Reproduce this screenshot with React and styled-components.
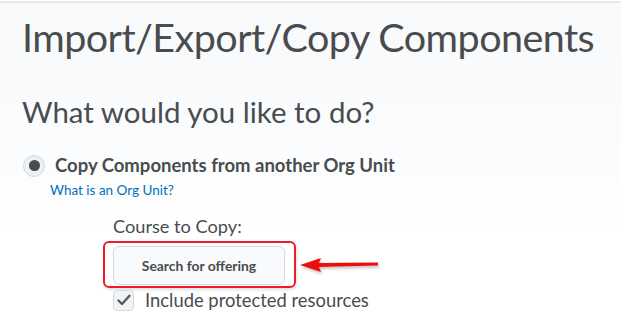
import React from "react";
import styled, { createGlobalStyle } from "styled-components";

const GlobalStyle = createGlobalStyle`
  html, body {
    margin: 0;
    padding: 0;
    background: #ffffff;
  }
  body {
    font-family: Lato, "Open Sans", "Liberation Sans", sans-serif;
    color: #494c4e;
    overflow: hidden;
  }
`;

const Page = styled.div`
  width: 621px;
  height: 327px;
  box-sizing: border-box;
  background: linear-gradient(#f8f9fb 0px, #fbfcfd 150px, #ffffff 230px);
`;

const TopRule = styled.div`
  height: 3px;
  background: linear-gradient(#ffffff 0 1px, #e7e8ea 1px 3px);
`;

const Content = styled.div`
  padding: 9px 0 0 22px;
  display: flex;
  flex-direction: column;
  align-items: flex-start;
`;

const Title = styled.h1`
  margin: 0;
  font-size: 39.5px;
  line-height: 50px;
  font-weight: 400;
  color: #494c4e;
  white-space: nowrap;
  letter-spacing: -0.55px;
`;

const Subtitle = styled.h2`
  margin: 32px 0 0;
  font-size: 29.5px;
  line-height: 36px;
  font-weight: 400;
  color: #494c4e;
  white-space: nowrap;
`;

const OptionRow = styled.label`
  margin: 24px 0 0 1px;
  display: flex;
  align-items: center;
  gap: 10px;
`;

const Radio = styled.span`
  width: 22px;
  height: 22px;
  box-sizing: border-box;
  border-radius: 50%;
  border: 1px solid #d3d9e3;
  background: #eef0f2;
  display: flex;
  align-items: center;
  justify-content: center;
  &::after {
    content: "";
    width: 11px;
    height: 11px;
    border-radius: 50%;
    background: #494c4e;
  }
`;

const OptionText = styled.span`
  font-size: 18.5px;
  line-height: 23px;
  font-weight: 700;
  color: #494c4e;
  white-space: nowrap;
`;

const HelpLink = styled.a`
  margin: 5px 0 0 28px;
  font-size: 13.5px;
  line-height: 16px;
  color: #006fbf;
  text-decoration: none;
`;

const Section = styled.div`
  margin: 17px 0 0 81px;
  display: flex;
  flex-direction: column;
  align-items: flex-start;
`;

const FieldLabel = styled.div`
  padding-left: 10px;
  font-size: 18.2px;
  line-height: 22px;
  color: #494c4e;
`;

const ButtonRow = styled.div`
  margin-top: 4px;
  display: flex;
  align-items: center;
  gap: 2px;
`;

const Highlight = styled.div`
  border: 2px solid #ec1c24;
  border-radius: 6px;
  padding: 3px 9px 1px 8px;
  box-shadow: 1px 2px 3px rgba(0, 0, 0, 0.12);
`;

const Button = styled.button`
  width: 172px;
  height: 39px;
  box-sizing: border-box;
  border: 1px solid #d3d9e3;
  border-radius: 6px;
  background: #f9fafb;
  font-family: Lato, "Open Sans", "Liberation Sans", sans-serif;
  font-size: 13.9px;
  font-weight: 700;
  color: #494c4e;
  cursor: pointer;
  padding: 0;
`;

const CheckRow = styled.label`
  margin: 1px 0 0 10px;
  display: flex;
  align-items: center;
  gap: 11px;
`;

const CheckBox = styled.span`
  width: 21px;
  height: 21px;
  box-sizing: border-box;
  border: 1px solid #d3d9e3;
  border-radius: 4px;
  background: #f1f3f5;
  display: flex;
  align-items: center;
  justify-content: center;
`;

const CheckText = styled.span`
  font-size: 18.4px;
  line-height: 22px;
  color: #494c4e;
  white-space: nowrap;
`;

const Arrow = () => (
  <svg width="84" height="24" viewBox="0 0 84 24" style={{ overflow: "visible" }}>
    <defs>
      <filter id="sh" x="-20%" y="-50%" width="140%" height="200%">
        <feDropShadow dx="1" dy="2" stdDeviation="1.5" floodColor="#000" floodOpacity="0.25" />
      </filter>
    </defs>
    <g filter="url(#sh)" fill="#ee1111">
      <polygon points="2,12 23,5 21,10 80,9.5 80,12.5 21,14 23,19" />
    </g>
  </svg>
);

const Check = () => (
  <svg width="14" height="12" viewBox="0 0 14 12">
    <path d="M1.5 6.5 L5 10 L12.5 1.8" fill="none" stroke="#565a5c" strokeWidth="2.4" strokeLinecap="round" strokeLinejoin="round" />
  </svg>
);

export default function App() {
  return (
    <>
      <GlobalStyle />
      <Page>
        <TopRule />
        <Content>
          <Title>Import/Export/Copy Components</Title>
          <Subtitle>What would you like to do?</Subtitle>
          <OptionRow>
            <Radio />
            <OptionText>Copy Components from another Org Unit</OptionText>
          </OptionRow>
          <HelpLink href="#">What is an Org Unit?</HelpLink>
          <Section>
            <FieldLabel>Course to Copy:</FieldLabel>
            <ButtonRow>
              <Highlight>
                <Button>Search for offering</Button>
              </Highlight>
              <Arrow />
            </ButtonRow>
            <CheckRow>
              <CheckBox>
                <Check />
              </CheckBox>
              <CheckText>Include protected resources</CheckText>
            </CheckRow>
          </Section>
        </Content>
      </Page>
    </>
  );
}
